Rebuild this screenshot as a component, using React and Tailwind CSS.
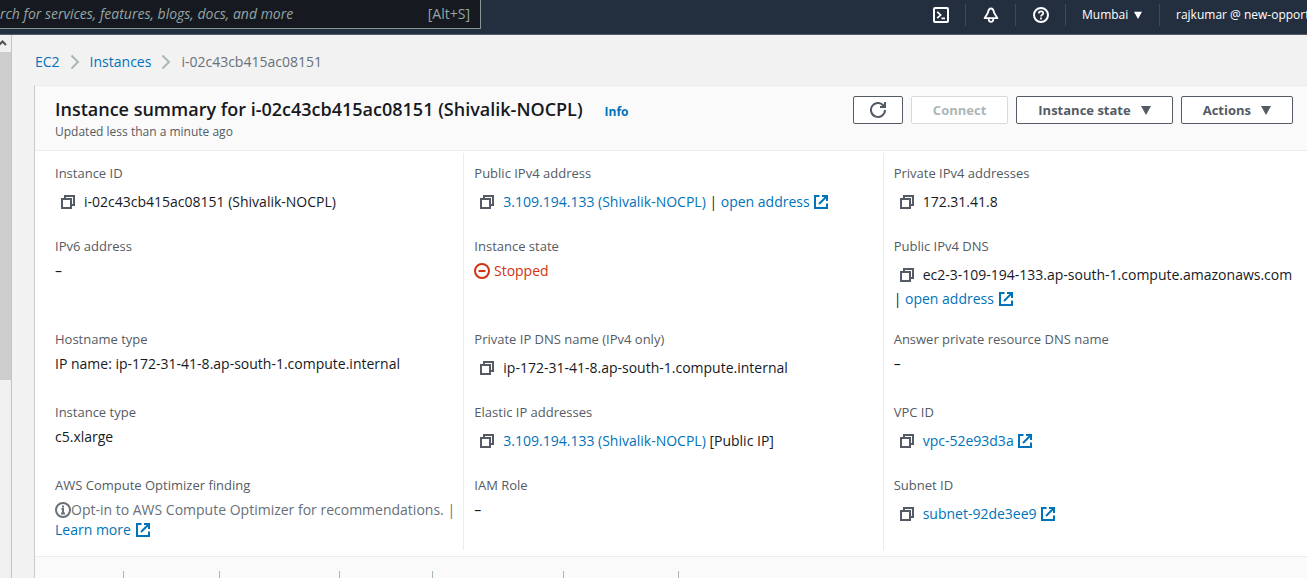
import React from 'react';

const strokeProps = {
    width: 16,
    height: 16,
    viewBox: '0 0 16 16',
    fill: 'none',
    stroke: 'currentColor',
    strokeWidth: 2,
    'aria-hidden': true
};

const CopyIcon = () => (
    <svg {...strokeProps}>
        <path d="M2 5h9v9H2z" />
        <path d="M5 5V2h9v9h-3" />
    </svg>
);

const ExternalIcon = () => (
    <svg {...strokeProps} className="inline-block align-[-3px]">
        <path d="M14 9.5V14H2V2h4.5" />
        <path d="M9 2h5v5" />
        <path d="M6 10l8-8" />
    </svg>
);

const StoppedIcon = () => (
    <svg {...strokeProps} className="inline-block align-[-3px]">
        <circle cx="8" cy="8" r="7" />
        <path d="M4.5 8h7" />
    </svg>
);

const InfoIcon = () => (
    <svg {...strokeProps} className="inline-block align-[-3px]">
        <circle cx="8" cy="8" r="7" />
        <path d="M8 11.5V7H6.5M6 11.5h4M7 4.5h2" />
    </svg>
);

const RefreshIcon = () => (
    <svg {...strokeProps}>
        <path d="M10 5h5V0" />
        <path d="M15 8a7 7 0 1 1-1.6-4.5L15 5" />
    </svg>
);

const TerminalIcon = () => (
    <svg {...strokeProps}>
        <rect x="1" y="1" width="14" height="14" rx="1" />
        <path d="M4.2 4.8L7.6 8l-3.4 3.2M8.5 11.3H12" strokeWidth="1.7" />
    </svg>
);

const BellIcon = () => (
    <svg {...strokeProps}>
        <path d="M8 1.5C6 1.5 5.3 3.4 4.9 5.8L1.6 11.2h12.8L11.1 5.8C10.7 3.4 10 1.5 8 1.5z" strokeWidth="1.8" strokeLinejoin="round" />
        <path d="M5.7 12c0 3.8 4.6 3.8 4.6 0" strokeWidth="1.8" />
    </svg>
);

const HelpIcon = () => (
    <svg {...strokeProps}>
        <circle cx="8" cy="8" r="7" />
        <path d="M5.8 6.5C5.8 3.5 10.3 3.7 10.3 6.2 10.3 7.7 8 7.8 8 9.5M8 10.5v2" strokeWidth="1.7" />
    </svg>
);

const Caret = ({ size }) => (
    <svg width={size} height={size} viewBox="0 0 10 10" fill="currentColor" aria-hidden="true">
        <path d="M0 1h10L5 10z" />
    </svg>
);

const Chevron = () => (
    <svg width="10" height="16" viewBox="0 0 10 16" fill="none" stroke="#aab7b8" strokeWidth="2" aria-hidden="true">
        <path d="M1.5 1.5L8 8l-6.5 6.5" />
    </svg>
);

const Link = ({ children, external }) => (
    <a href="#" className="text-[#0073bb]">
        {children}
        {external && <> <ExternalIcon /></>}
    </a>
);

const Copyable = ({ text, children }) => (
    <>
        <button type="button" aria-label="Copy" className="inline-flex h-7 w-[29px] items-center justify-end pr-2 pl-[5px] align-[-3px] text-[#545b64]">
            <CopyIcon />
        </button>
        {text}
        {children}
    </>
);

const columns = [
    [
        { label: 'Instance ID', value: <Copyable text="i-02c43cb415ac08151 (Shivalik-NOCPL)" /> },
        { label: 'IPv6 address', value: '–' },
        { label: 'Hostname type', value: 'IP name: ip-172-31-41-8.ap-south-1.compute.internal' },
        { label: 'Instance type', value: 'c5.xlarge' },
        {
            label: 'AWS Compute Optimizer finding',
            value: (
                <span className="text-[#687078]">
                    <InfoIcon />Opt-in to AWS Compute Optimizer for recommendations. | <Link external>Learn more</Link>
                </span>
            )
        }
    ],
    [
        {
            label: 'Public IPv4 address',
            value: <Copyable><Link>3.109.194.133 (Shivalik-NOCPL)</Link> | <Link external>open address</Link></Copyable>
        },
        { label: 'Instance state', value: <span className="text-[#d13212]"><StoppedIcon /> Stopped</span> },
        { label: 'Private IP DNS name (IPv4 only)', value: <Copyable text="ip-172-31-41-8.ap-south-1.compute.internal" /> },
        { label: 'Elastic IP addresses', value: <Copyable><Link>3.109.194.133 (Shivalik-NOCPL)</Link> [Public IP]</Copyable> },
        { label: 'IAM Role', value: '–' }
    ],
    [
        { label: 'Private IPv4 addresses', value: <Copyable text="172.31.41.8" /> },
        {
            label: 'Public IPv4 DNS',
            value: <Copyable text="ec2-3-109-194-133.ap-south-1.compute.amazonaws.com"> | <Link external>open address</Link></Copyable>
        },
        { label: 'Answer private resource DNS name', value: '–' },
        { label: 'VPC ID', value: <Copyable><Link external>vpc-52e93d3a</Link></Copyable> },
        { label: 'Subnet ID', value: <Copyable><Link external>subnet-92de3ee9</Link></Copyable> }
    ]
];

const tabs = ['w-[89px]', 'w-24', 'w-[120px]', 'w-[93px]', 'w-[131px]', 'w-[115px]'];

const TopBar = () => (
    <header className="flex h-[35px] shrink-0 items-start justify-between border-b border-[#545b64] bg-[#232f3e] text-white">
        <label className="flex h-[29px] w-[481px] items-center border-r border-b border-[#879596] bg-[#16191f] pr-2.5 text-[14px] text-[#95a5a6]">
            <input
                type="search"
                aria-label="Search"
                placeholder="rch for services, features, blogs, docs, and more"
                className="min-w-0 flex-1 italic outline-none placeholder:text-[#95a5a6]"
            />
            <span>[Alt+S]</span>
        </label>
        <nav className="flex h-[29px] items-center text-[12px]">
            <button type="button" aria-label="CloudShell" className="flex w-12 justify-center"><TerminalIcon /></button>
            <button type="button" aria-label="Notifications" className="flex h-[22px] w-[50px] items-center justify-center border-l border-[#3f4a59]"><BellIcon /></button>
            <button type="button" aria-label="Help" className="flex h-[22px] w-[50px] items-center justify-center border-l border-[#3f4a59]"><HelpIcon /></button>
            <button type="button" className="flex h-[22px] w-[94px] items-center gap-1.5 border-l border-[#3f4a59] pl-4">
                Mumbai <Caret size={8} />
            </button>
            <button type="button" className="h-[22px] w-[148px] overflow-hidden border-l border-[#3f4a59] pl-4 text-left whitespace-nowrap">
                rajkumar @ new-opport
            </button>
        </nav>
    </header>
);

const SideScroll = () => (
    <div className="flex w-3 shrink-0 flex-col border-r border-[#c4c4c4] bg-[#f0f0f0]">
        <svg width="11" height="17" viewBox="0 0 11 17" fill="none" stroke="#505050" strokeWidth="2" aria-hidden="true">
            <path d="M-1 10l3.5-3.5L6 10" />
        </svg>
        <div className="h-[328px] bg-[#cdcdcd]" />
    </div>
);

const buttonClass = 'flex h-7 items-center gap-2.5 rounded-[2px] border px-[21px] font-bold bg-white';

const App = () => {
    return (
        <div className="flex h-screen flex-col overflow-hidden bg-[#f2f2f2] font-['Open_Sans','Noto_Sans',sans-serif] text-[13px] leading-5 text-[#16191f]">
            <TopBar />
            <div className="flex min-h-0 flex-1">
                <SideScroll />
                <main className="flex min-w-0 flex-1 flex-col pl-[22px]">
                    <nav aria-label="Breadcrumb" className="flex h-[50px] shrink-0 items-center gap-2.5 pt-1 pl-px text-[14px]">
                        <Link>EC2</Link>
                        <Chevron />
                        <Link>Instances</Link>
                        <Chevron />
                        <span className="text-[#687078]">i-02c43cb415ac08151</span>
                    </nav>
                    <section className="flex flex-1 flex-col border-t border-l border-t-[#eaeded] border-l-[#c8cccc] bg-white">
                        <div className="flex h-[65px] shrink-0 items-start justify-between border-b border-[#eaeded] bg-[#fafafa] pt-2.5 pr-3.5 pl-5">
                            <div>
                                <div className="flex items-baseline gap-[22px]">
                                    <h1 className="text-[18px] leading-[26px] font-semibold">Instance summary for i-02c43cb415ac08151 (Shivalik-NOCPL)</h1>
                                    <a href="#" className="text-[12px] font-bold text-[#0073bb]">Info</a>
                                </div>
                                <p className="text-[12px] leading-5 text-[#545b64]">Updated less than a minute ago</p>
                            </div>
                            <div className="flex gap-2 text-[#545b64]">
                                <button type="button" aria-label="Refresh" className="flex h-7 w-[50px] items-center justify-center rounded-[2px] border border-[#545b64] bg-white">
                                    <RefreshIcon />
                                </button>
                                <button type="button" disabled className={`${buttonClass} border-[#d5dbdb] text-[#aab7b8]`}>Connect</button>
                                <button type="button" className={`${buttonClass} border-[#545b64]`}>Instance state <Caret size={10} /></button>
                                <button type="button" className={`${buttonClass} border-[#545b64]`}>Actions <Caret size={10} /></button>
                            </div>
                        </div>
                        <div className="grid shrink-0 grid-cols-3 gap-y-5 pt-0.5 pr-[5px] pb-1.5 pl-[9px]">
                            {columns.map((fields, i) => (
                                <dl key={i} className="row-span-5 grid grid-rows-subgrid border-l border-[#eaeded] py-2.5 pr-1.5 pl-2.5 first:border-transparent">
                                    {fields.map(({ label, value }) => (
                                        <div key={label}>
                                            <dt className="mb-[5px] text-[#545b64]">{label}</dt>
                                            <dd className="text-[14px]">{value}</dd>
                                        </div>
                                    ))}
                                </dl>
                            ))}
                        </div>
                        <div className="flex flex-1 border-t border-[#eaeded] bg-[#fafafa] pt-3.5">
                            {tabs.map((width, i) => (
                                <div key={i} className={`${width} h-5 border-r border-[#aab7b8]`} />
                            ))}
                        </div>
                    </section>
                </main>
            </div>
        </div>
    );
};

export default App;
